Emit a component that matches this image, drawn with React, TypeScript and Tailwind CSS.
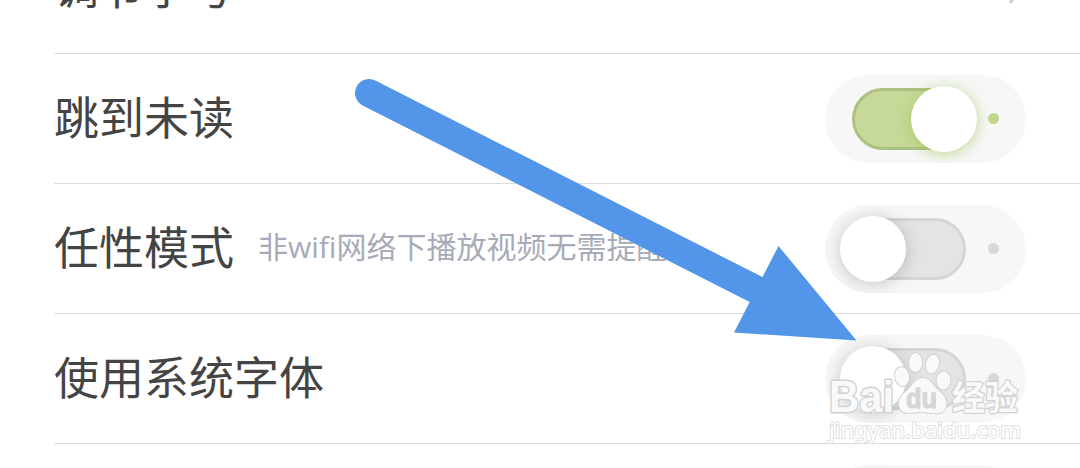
import clsx from 'clsx';

type Setting = {
  title: string;
  hint?: string;
  on?: boolean;
  link?: boolean;
};

const settings: Setting[] = [
  { title: '调节字号', link: true },
  { title: '跳到未读', on: true },
  { title: '任性模式', hint: '非wifi网络下播放视频无需提醒' },
  { title: '使用系统字体' },
  { title: '' },
];

function Toggle({ on }: { on?: boolean }) {
  return (
    <div className="mr-[54px] flex h-[88px] w-[201px] shrink-0 items-center justify-between overflow-hidden rounded-full bg-[#f7f7f7] px-[27px]">
      <div
        className={clsx(
          'flex h-[62px] w-[114px] items-center rounded-full border-[3px]',
          on ? 'justify-end border-[#abc17f] bg-[#c6d998]' : 'justify-start border-[#d5d5d5] bg-[#e4e4e4]',
        )}
      >
        <div
          className={clsx(
            'size-[66px] shrink-0 rounded-full bg-white',
            on
              ? '-mr-[13.5px] shadow-[0_2px_14px_rgba(150,195,80,0.6)]'
              : '-ml-[15px] shadow-[0_2px_18px_rgba(0,0,0,0.2)]',
          )}
        />
      </div>
      <div className={clsx('size-[11px] rounded-full', on ? 'bg-[#bfd68d]' : 'bg-[#d8d8d8]')} />
    </div>
  );
}

function Row({ title, hint, on, link }: Setting) {
  return (
    <div className="ml-[54px] flex h-[130px] shrink-0 items-center justify-between border-b border-[#dcdcdc]">
      <div className="flex items-center gap-6 pb-[7px] leading-none whitespace-nowrap">
        <span className="text-[45px] text-[#444]">{title}</span>
        {hint && (
          <span className="pt-[3px] font-['Open_Sans','Noto_Sans_CJK_SC',sans-serif] text-[30px] text-[#a6abb7]">
            {hint}
          </span>
        )}
      </div>
      {link ? (
        <svg className="mr-[61px]" width="16" height="32" viewBox="0 0 16 32" fill="none">
          <path d="M7 4 L16 17 L7 30" stroke="#ccc" strokeWidth="3" />
        </svg>
      ) : (
        <Toggle on={on} />
      )}
    </div>
  );
}

function Arrow() {
  return (
    <svg className="absolute inset-0" width="1080" height="468" viewBox="0 0 1080 468">
      <path d="M369 93 L757 290" stroke="#5295e9" strokeWidth="28" strokeLinecap="round" />
      <path d="M778.5 246 L856.5 340.5 L734 332.5 Z" fill="#5295e9" />
    </svg>
  );
}

function Watermark() {
  return (
    <svg
      className="absolute top-[345px] left-[820px]"
      width="215"
      height="105"
      viewBox="820 345 215 105"
      fill="#f9f9f9"
      stroke="#d2d2d2"
      strokeWidth="2"
      strokeLinejoin="round"
      paintOrder="stroke"
    >
      <text x="829" y="412" fontSize="44" fontWeight="700" textLength="65" lengthAdjust="spacingAndGlyphs" fontFamily="Liberation Sans" strokeWidth="3">
        Bai
      </text>
      <ellipse cx="902" cy="376.5" rx="7" ry="9.5" transform="rotate(-10 902 376.5)" />
      <ellipse cx="915.5" cy="362.5" rx="6.5" ry="9.5" />
      <ellipse cx="932.5" cy="364" rx="6.5" ry="9.5" transform="rotate(14 932.5 364)" />
      <ellipse cx="943.5" cy="380.5" rx="7" ry="9" />
      <path d="M922.5 378 C914 378 912 387 906 391.5 C900 396 897.5 401 899.5 407 C902 416 912 412 922 412 C932 412 942 417 945.5 408 C948 401 944 395 939 391 C933 386 931 378 922.5 378 Z" />
      <text x="906" y="408" fontSize="28" fontWeight="700" textLength="31" lengthAdjust="spacingAndGlyphs" fontFamily="Liberation Sans" fill="#d6d6d6" stroke="#c2c2c2" strokeWidth="0.8">
        du
      </text>
      <text x="952" y="410" fontSize="34" fontWeight="700" textLength="66" lengthAdjust="spacingAndGlyphs" strokeWidth="2.5">
        经验
      </text>
      <text x="829" y="438" fontSize="22" fontFamily="Noto Sans" textLength="192" fill="#fff" stroke="#e0e0e0">
        jingyan.baidu.com
      </text>
    </svg>
  );
}

export default function App() {
  return (
    <div className="relative h-[468px] w-[1080px] overflow-hidden bg-white font-['Noto_Sans_CJK_SC',sans-serif]">
      <div className="-mt-[76px] flex flex-col">
        {settings.map((s, i) => (
          <Row key={i} {...s} />
        ))}
      </div>
      <Arrow />
      <Watermark />
    </div>
  );
}
